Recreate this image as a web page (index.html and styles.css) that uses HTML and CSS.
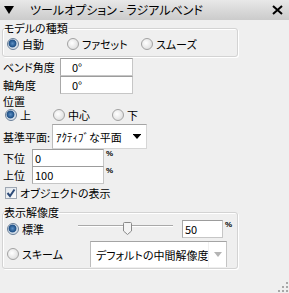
FILE: index.html
```html
<!DOCTYPE html>
<html lang="ja">
<head>
    <meta charset="UTF-8">
    <title>ツールオプション - ラジアルベンド</title>
    <link rel="stylesheet" href="styles.css">
</head>
<body>
<div class="window">
    <div class="titlebar">
        <svg class="tri" width="10" height="8" viewBox="0 0 10 8"><polygon points="0,0 10,0 5,8" fill="#000"/></svg>
        <span class="title">ツールオプション - ラジアルベンド</span>
        <svg class="close" width="11" height="10" viewBox="0 0 11 10"><path d="M1 1 L10 9 M10 1 L1 9" stroke="#000" stroke-width="2"/></svg>
    </div>

    <fieldset class="group model">
        <legend>モデルの種類</legend>
        <div class="opts">
            <label class="opt w60"><span class="radio on"></span>自動</label>
            <label class="opt w74"><span class="radio"></span>ファセット</label>
            <label class="opt"><span class="radio"></span>スムーズ</label>
        </div>
    </fieldset>

    <div class="field angle"><span class="lbl">ベンド角度</span><span class="box">0°</span></div>
    <div class="field angle"><span class="lbl">軸角度</span><span class="box">0°</span></div>

    <div class="plain">位置</div>
    <div class="opts pos">
        <label class="opt w48"><span class="radio on"></span>上</label>
        <label class="opt w59"><span class="radio"></span>中心</label>
        <label class="opt"><span class="radio"></span>下</label>
    </div>

    <div class="field plane">
        <span class="lbl">基準平面:</span>
        <div class="select">
            <span class="sel-text">ｱｸﾃｨﾌﾞな平面</span>
            <svg width="8" height="5" viewBox="0 0 8 5"><rect x="0" y="0" width="8" height="1" fill="#000"/><polygon points="0.5,1 7.5,1 4,5" fill="#000"/></svg>
        </div>
    </div>

    <div class="field limit"><span class="lbl">下位</span><span class="box">0</span><span class="pct">%</span></div>
    <div class="field limit second"><span class="lbl">上位</span><span class="box">100</span><span class="pct">%</span></div>

    <label class="check-row">
        <span class="check"><svg width="10" height="10" viewBox="0 0 10 10"><path d="M1.5 5 L4 8 L8.5 1.5" fill="none" stroke="#2c4a78" stroke-width="2"/></svg></span>
        オブジェクトの表示
    </label>

    <fieldset class="group res">
        <legend>表示解像度</legend>
        <div class="opts res-row">
            <label class="opt w71"><span class="radio on"></span>標準</label>
            <div class="slider">
                <div class="track"></div>
                <svg class="thumb" width="9" height="13" viewBox="0 0 9 13"><path d="M1.5 0.5 H7.5 Q8.5 0.5 8.5 1.5 V9 L4.5 12.5 L0.5 9 V1.5 Q0.5 0.5 1.5 0.5 Z" fill="#f4f4f4" stroke="#8a8a8a"/></svg>
            </div>
            <span class="box num">50</span><span class="pct">%</span>
        </div>
        <div class="opts res-row scheme">
            <label class="opt w83"><span class="radio"></span>スキーム</label>
            <div class="select wide">
                <span class="sel-text">デフォルトの中間解像度</span>
                <span class="arrow-part"><svg width="8" height="5" viewBox="0 0 8 5"><polygon points="0,0 8,0 4,5" fill="#b4b4b4"/></svg></span>
            </div>
        </div>
    </fieldset>

    <svg class="grip" width="11" height="12" viewBox="0 0 11 12">
        <rect x="8" y="1" width="2" height="2" fill="#a8a8a8"/>
        <rect x="8" y="5" width="2" height="2" fill="#a8a8a8"/>
        <rect x="4" y="5" width="2" height="2" fill="#a8a8a8"/>
        <rect x="8" y="9" width="2" height="2" fill="#a8a8a8"/>
        <rect x="4" y="9" width="2" height="2" fill="#a8a8a8"/>
        <rect x="0" y="9" width="2" height="2" fill="#a8a8a8"/>
    </svg>
</div>
</body>
</html>
```

FILE: styles.css
```css
* {
    box-sizing: border-box;
}
body {
    margin: 0;
    background-color: #efefef;
    font-family: "Noto Sans CJK JP", "Noto Sans", sans-serif;
    font-size: 11px;
    font-feature-settings: "palt";
    color: #000;
}
.window {
    position: relative;
    width: 289px;
    height: 293px;
    overflow: hidden;
}
.titlebar {
    display: flex;
    align-items: center;
    height: 20px;
    padding: 0 4px 0 4px;
    background: linear-gradient(#e8e8e8, #cbcbcb);
}
.title {
    flex: 1;
    margin-left: 16px;
    font-size: 12px;
    line-height: 20px;
}
.close {
    margin-right: 2px;
}
.group {
    width: 236px;
    margin: 2px 0 0 2px;
    padding: 0;
    border: 1px solid #d3d3d3;
    border-radius: 3px;
    box-shadow: inset 1px 1px 0 #fff, 1px 1px 0 #fff;
    min-inline-size: 0;
}
legend {
    padding: 0;
    margin-left: 1px;
    line-height: 12px;
}
.opts {
    display: flex;
    align-items: center;
    height: 14px;
    padding-left: 4px;
}
.model {
    padding-top: 3px;
    padding-bottom: 5px;
}
.opt {
    display: flex;
    align-items: center;
    white-space: nowrap;
}
.w48 { width: 48px; }
.w59 { width: 59px; }
.w60 { width: 60px; }
.w71 { width: 71px; }
.w74 { width: 74px; }
.w83 { width: 83px; }
.radio {
    display: inline-block;
    width: 12px;
    height: 12px;
    margin-right: 3px;
    border: 1px solid #a2a2a2;
    border-radius: 50%;
    background: radial-gradient(circle at 40% 40%, #fff 0, #e2e2e2 70%);
}
.radio.on {
    border-color: #6a7f98;
    background: radial-gradient(circle at 45% 45%, #5b8fc4 0, #1d4f86 45%, #c7d4e2 55%, #eef2f6 80%);
}
.field {
    display: flex;
    align-items: center;
    height: 18px;
    padding-left: 3px;
}
.angle {
    margin-top: 1px;
}
.angle + .angle {
    margin-top: 0;
}
.angle .lbl {
    width: 57px;
}
.box {
    height: 18px;
    padding: 1px 0 0 2px;
    line-height: 14px;
    background-color: #fff;
    border: 1px solid #c6c6c6;
    border-top-color: #9c9c9c;
    border-left-color: #a8a8a8;
}
.angle .box {
    width: 73px;
    padding-left: 11px;
}
.plain {
    height: 14px;
    line-height: 14px;
    padding-left: 3px;
}
.pos {
    padding-left: 5px;
}
.plane {
    height: 25px;
    margin-top: 2px;
}
.plane .lbl {
    width: 49px;
}
.select {
    display: flex;
    align-items: center;
    justify-content: space-between;
    width: 95px;
    height: 25px;
    padding: 0 5px 0 3px;
    background-color: #fff;
    border: 1px solid #d6d6d6;
    border-top-color: #a4a4a4;
    border-left-color: #bcbcbc;
}
.sel-text {
    white-space: nowrap;
}
.limit .lbl {
    width: 29px;
}
.limit .box {
    width: 72px;
}
.limit.second {
    margin-top: -1px;
}
.pct {
    align-self: flex-start;
    margin: 1px 0 0 2px;
    font-family: "Liberation Sans", sans-serif;
    font-size: 8px;
    font-weight: bold;
    line-height: 8px;
}
.check-row {
    display: flex;
    align-items: center;
    height: 15px;
    padding-left: 5px;
    margin-top: 1px;
}
.check {
    display: inline-flex;
    align-items: center;
    justify-content: center;
    width: 12px;
    height: 12px;
    margin-right: 3px;
    border: 1px solid #9da6b2;
    background: linear-gradient(135deg, #dfe4ea, #fbfbfb);
}
.res {
    margin-top: 6px;
    padding-top: 2px;
    padding-bottom: 1px;
}
.res-row {
    height: 18px;
}
.slider {
    position: relative;
    width: 95px;
    height: 18px;
}
.track {
    position: absolute;
    left: 0;
    right: 0;
    top: 5px;
    height: 2px;
    border-top: 1px solid #a9a9a9;
    border-bottom: 1px solid #fff;
}
.thumb {
    position: absolute;
    left: 45px;
    top: 2px;
}
.num {
    width: 41px;
    margin-left: 9px;
}
.scheme {
    height: 26px;
    margin-top: 3px;
}
.select.wide {
    width: 137px;
    height: 26px;
    padding: 0 0 0 5px;
    border-bottom: none;
    border-right-color: #c4c4c4;
}
.arrow-part {
    display: flex;
    align-items: center;
    justify-content: center;
    width: 19px;
    height: 100%;
    border-left: 1px solid #f0f0f0;
}
.grip {
    position: absolute;
    right: 0;
    bottom: 0;
}
```
